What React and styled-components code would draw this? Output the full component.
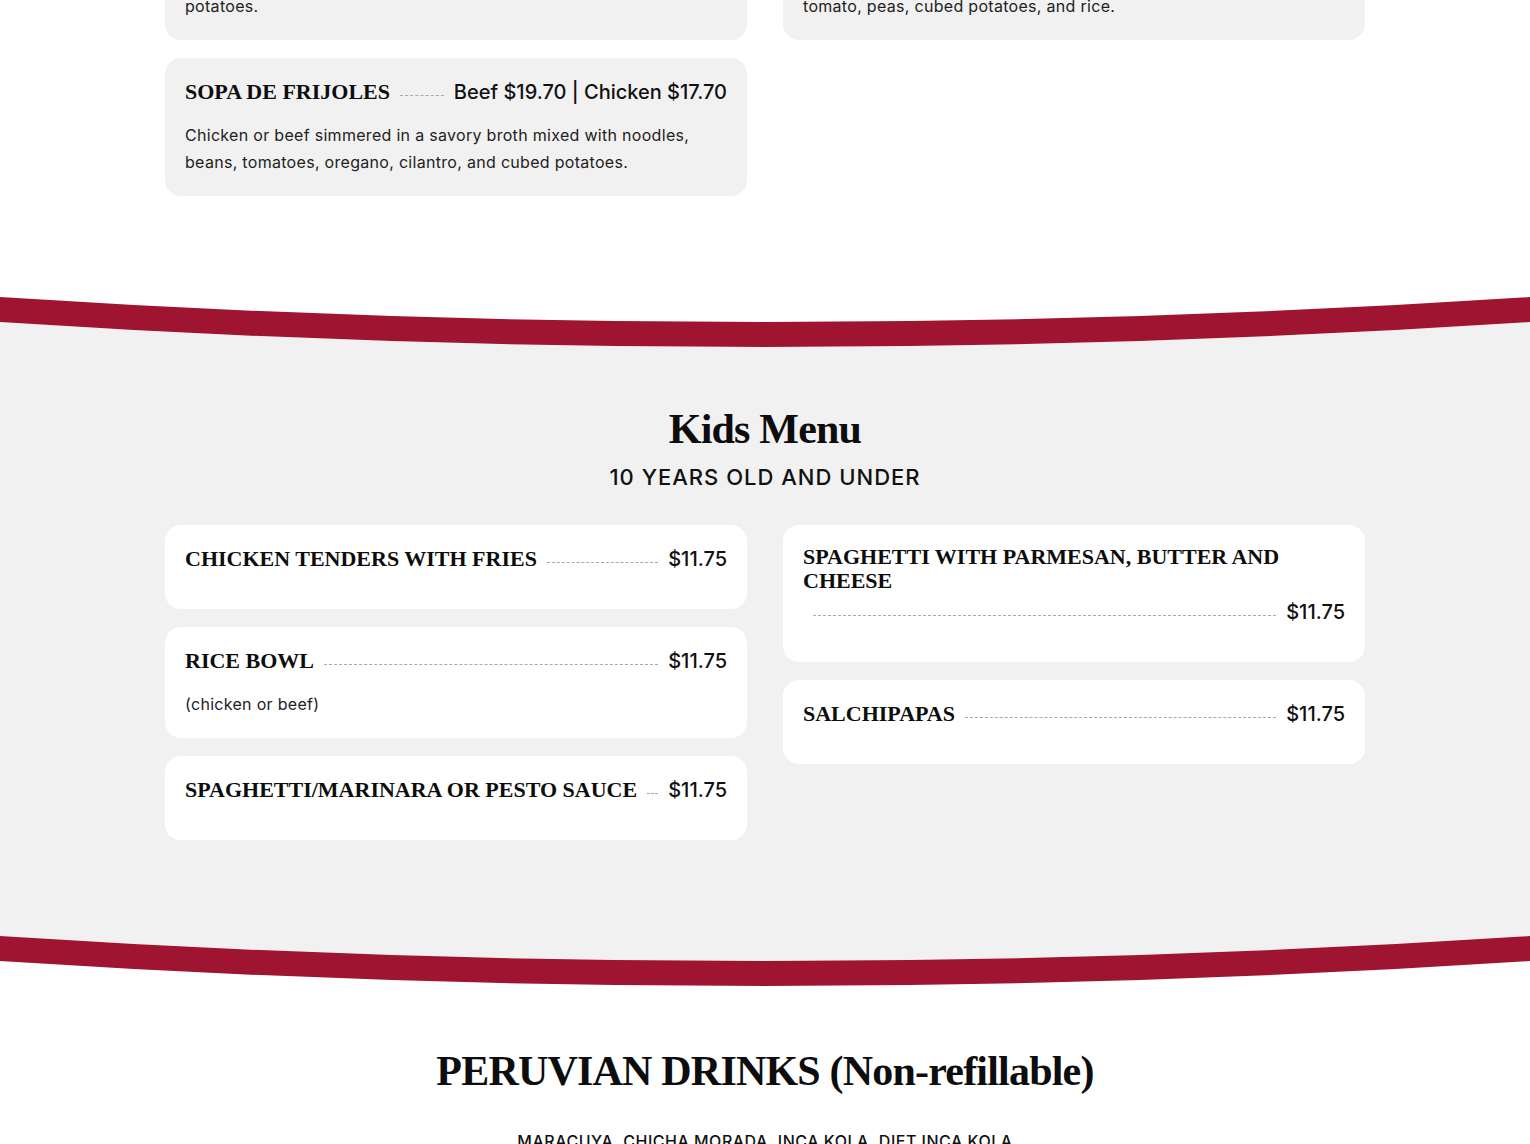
import React from "react";
import styled, { createGlobalStyle } from "styled-components";

const GlobalStyle = createGlobalStyle`
  html, body { margin: 0; padding: 0; background: #ffffff; }
  body {
    font-family: Inter, "Open Sans", "Liberation Sans", sans-serif;
    color: #111111;
    overflow: hidden;
  }
  * { box-sizing: border-box; }
`;

const RED = "#9f1430";
const GRAY = "#f1f1f1";

const Page = styled.main`
  /* page is scrolled: the first cards start above the viewport */
  margin-top: -98px;
`;

const WhiteSection = styled.section`
  background: #ffffff;
  padding: ${(p) => p.$pad || "0 0 101px"};
`;

const GraySection = styled.section`
  background: ${GRAY};
  padding: 57px 0 96px;
`;

const Container = styled.div`
  width: 1200px;
  margin: 0 auto;
`;

const Columns = styled.div`
  display: grid;
  grid-template-columns: 1fr 1fr;
  column-gap: 36px;
  align-items: start;
`;

const Column = styled.div`
  display: flex;
  flex-direction: column;
  gap: 18px;
`;

const Card = styled.article`
  background: ${(p) => (p.$tone === "white" ? "#ffffff" : GRAY)};
  border-radius: 16px;
  padding: 20px;
`;

const ItemHeader = styled.div`
  display: flex;
  flex-wrap: wrap;
  align-items: center;
  row-gap: 5px;
  margin-bottom: 16px;
`;

const ItemName = styled.h3`
  margin: 0;
  font-family: "Liberation Serif", "Times New Roman", serif;
  font-weight: 700;
  font-size: 22px;
  line-height: 24px;
  text-transform: uppercase;
  color: #0d0d0d;
  flex: 0 1 auto;
`;

const Leader = styled.span`
  flex: 1 1 8px;
  min-width: 8px;
  margin: 6px 10px 0;
  border-top: 1px dashed #a9a9a9;
  height: 0;
`;

const Price = styled.span`
  font-size: 20px;
  font-weight: 500;
  line-height: 28px;
  color: #111111;
  white-space: nowrap;
  margin-left: auto;
`;

const Description = styled.p`
  margin: 0;
  font-size: 16px;
  line-height: 27px;
  letter-spacing: 0.3px;
  color: #222222;
`;

const SectionTitle = styled.h2`
  margin: 0;
  text-align: center;
  font-family: "Liberation Serif", "Times New Roman", serif;
  font-weight: 700;
  font-size: 42px;
  letter-spacing: -0.8px;
  line-height: ${(p) => p.$lh || "50px"};
  color: #0d0d0d;
`;

const Subtitle = styled.p`
  margin: 8px 0 33px;
  text-align: center;
  font-size: 22px;
  line-height: 30px;
  font-weight: 500;
  letter-spacing: 1px;
  color: #111111;
`;

const DrinkList = styled.p`
  margin: 33px 0 0;
  text-align: center;
  font-size: 16px;
  line-height: 27px;
  font-weight: 500;
  letter-spacing: 0.5px;
  text-transform: uppercase;
  color: #111111;
`;

const WaveSvg = styled.svg`
  display: block;
  width: 100%;
  height: 50px;
  background: #ffffff;
`;

function Wave({ into }) {
  // into="gray": white above, gray below. into="white": gray above, white below.
  return (
    <WaveSvg viewBox="0 0 1530 50" preserveAspectRatio="none" aria-hidden="true">
      {into === "gray" ? (
        <path d="M0,25 Q765,75 1530,25 L1530,50 L0,50 Z" fill={GRAY} />
      ) : (
        <path d="M0,0 Q765,50 1530,0 Z" fill={GRAY} />
      )}
      <path d="M0,0 Q765,50 1530,0 L1530,25 Q765,75 0,25 Z" fill={RED} />
    </WaveSvg>
  );
}

function MenuItem({ name, price, desc, tone }) {
  return (
    <Card $tone={tone}>
      <ItemHeader>
        <ItemName>{name}</ItemName>
        <Leader />
        <Price>{price}</Price>
      </ItemHeader>
      {desc ? <Description>{desc}</Description> : null}
    </Card>
  );
}

const kidsLeft = [
  { name: "Chicken Tenders with Fries", price: "$11.75" },
  { name: "Rice Bowl", price: "$11.75", desc: "(chicken or beef)" },
  { name: "Spaghetti/Marinara or Pesto Sauce", price: "$11.75" },
];

const kidsRight = [
  { name: "Spaghetti with Parmesan, Butter and Cheese", price: "$11.75" },
  { name: "Salchipapas", price: "$11.75" },
];

export default function App() {
  return (
    <>
      <GlobalStyle />
      <Page>
        <WhiteSection>
          <Container>
            <Columns>
              <Column>
                <MenuItem
                  name="Sopa de Pollo"
                  price="$16.70"
                  desc={
                    <>
                      Chicken broth with noodles, carrots, celery, and
                      <br />
                      potatoes.
                    </>
                  }
                />
                <MenuItem
                  name="Sopa de Frijoles"
                  price="Beef $19.70 | Chicken $17.70"
                  desc="Chicken or beef simmered in a savory broth mixed with noodles, beans, tomatoes, oregano, cilantro, and cubed potatoes."
                />
              </Column>
              <Column>
                <MenuItem
                  name="Aguadito de Pollo"
                  price="$17.70"
                  desc={
                    <>
                      Cilantro chicken soup with carrots, onion,
                      <br />
                      tomato, peas, cubed potatoes, and rice.
                    </>
                  }
                />
              </Column>
            </Columns>
          </Container>
        </WhiteSection>

        <Wave into="gray" />

        <GraySection>
          <Container>
            <SectionTitle>Kids Menu</SectionTitle>
            <Subtitle>10 YEARS OLD AND UNDER</Subtitle>
            <Columns>
              <Column>
                {kidsLeft.map((it) => (
                  <MenuItem key={it.name} tone="white" {...it} />
                ))}
              </Column>
              <Column>
                {kidsRight.map((it) => (
                  <MenuItem key={it.name} tone="white" {...it} />
                ))}
              </Column>
            </Columns>
          </Container>
        </GraySection>

        <Wave into="white" />

        <WhiteSection $pad="61px 0 80px">
          <Container>
            <SectionTitle $lh="48px">PERUVIAN DRINKS (Non-refillable)</SectionTitle>
            <DrinkList>Maracuya, Chicha Morada, Inca Kola, Diet Inca Kola</DrinkList>
          </Container>
        </WhiteSection>
      </Page>
    </>
  );
}
